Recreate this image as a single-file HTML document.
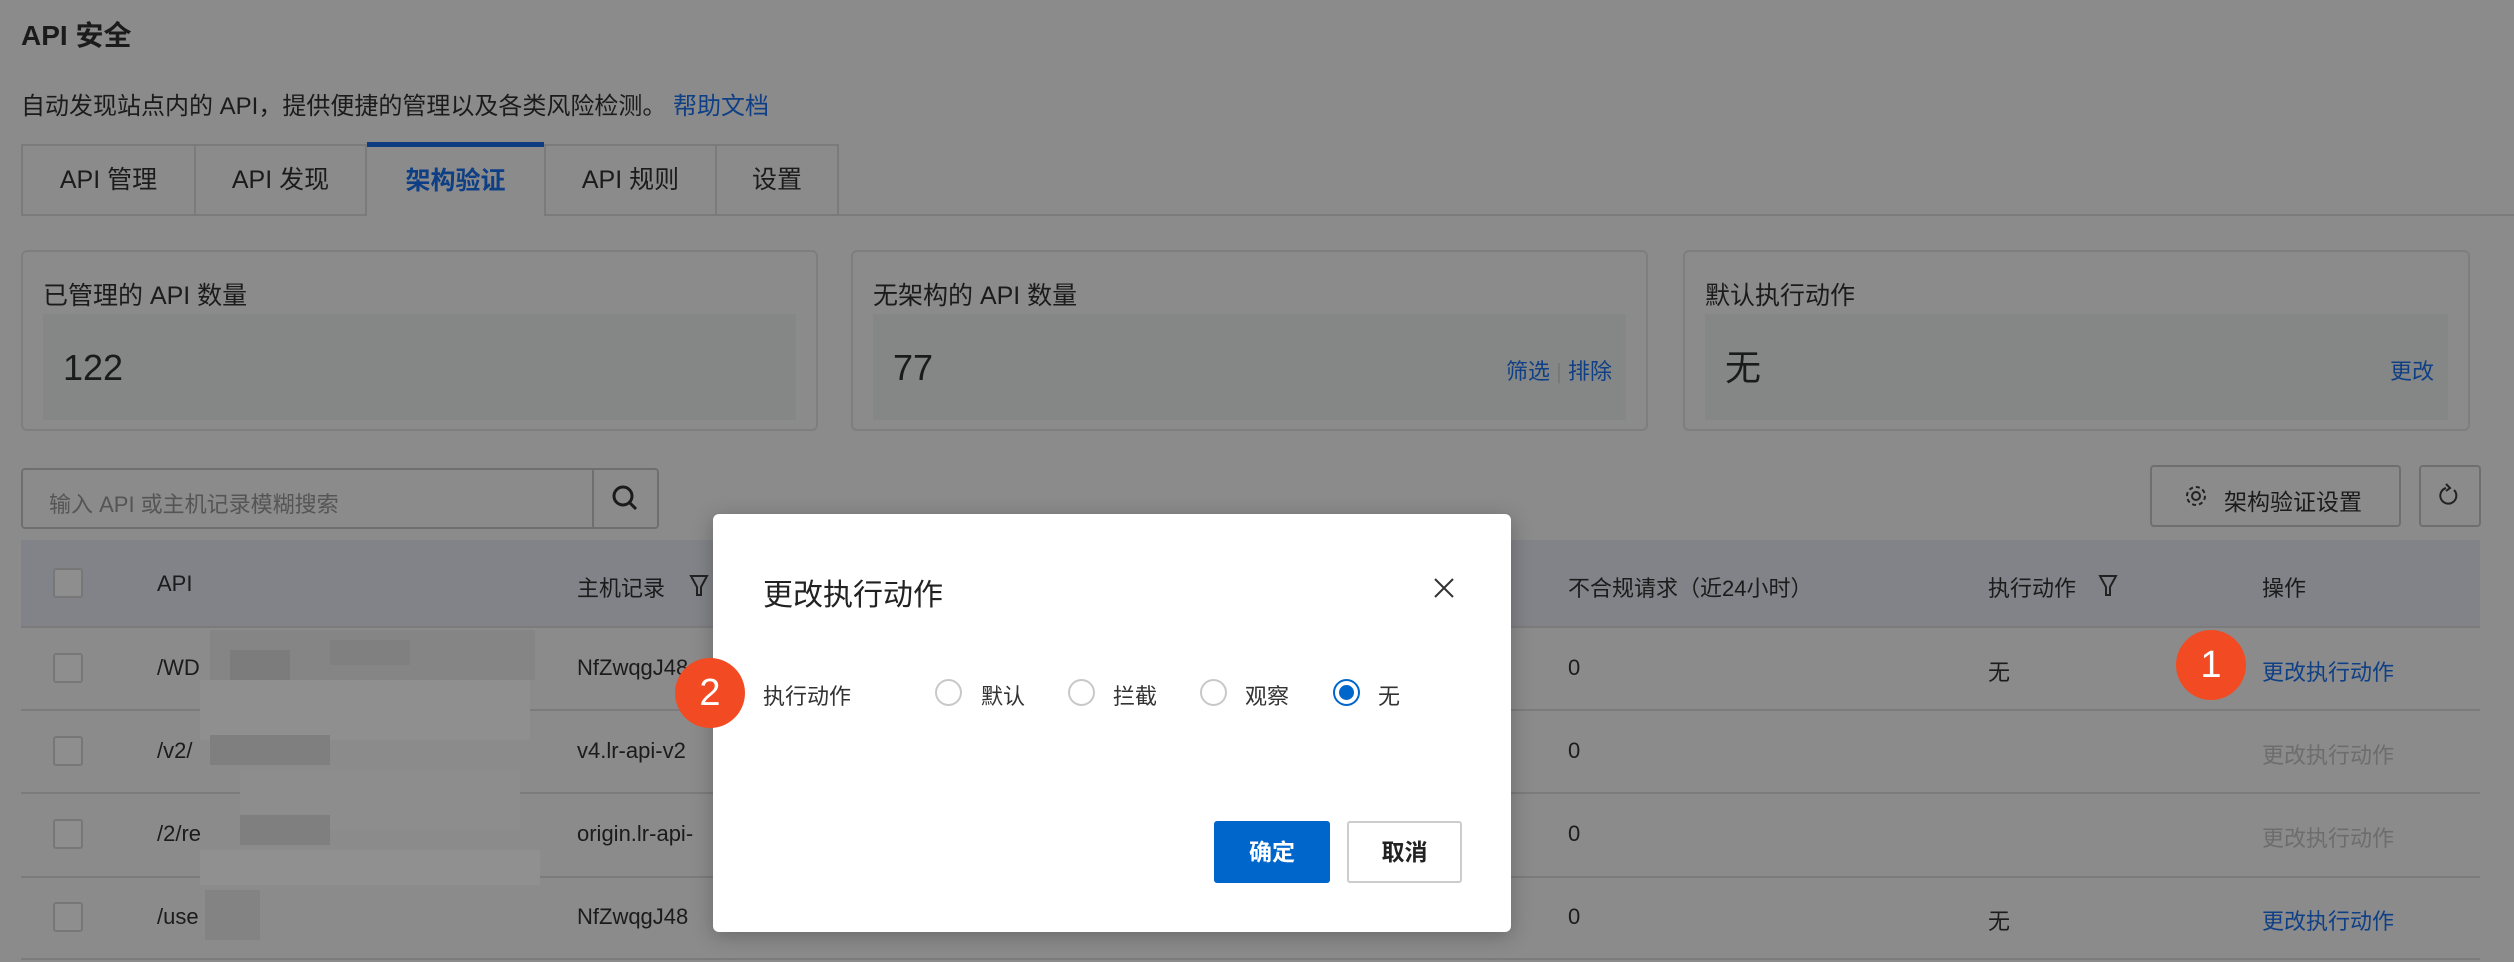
<!DOCTYPE html>
<html><head><meta charset="utf-8"><style>
*{margin:0;padding:0;box-sizing:border-box}
body{width:2514px;height:962px;background:#8b8b8b;font-family:"Liberation Sans","Noto Sans CJK SC",sans-serif;color:#1b1b1b;position:relative;overflow:hidden}
.a{position:absolute;white-space:nowrap}
.card{position:absolute;top:250px;height:181px;border:2px solid #7e7e7e;border-radius:6px}
.card .lb{position:absolute;left:20px;top:24px;font-size:25px}
.card .in{position:absolute;left:20px;right:20px;top:62px;height:106px;background:#858786}
.card .v{position:absolute;left:20px;top:34px;font-size:36px;line-height:40px}
.cb{position:absolute;width:30px;height:30px;border:2px solid #777;border-radius:3px;background:#8e8e8e}
.tx{font-size:22px}
.ln{position:absolute;left:21px;width:2459px;height:2px;background:#7b7b7b}
.rd{position:absolute;width:27px;height:27px;border:2px solid #c8c8c8;border-radius:50%;background:#fff}
.badge{position:absolute;width:70px;height:70px;border-radius:50%;background:#f24b23;color:#fff;font-size:38px;text-align:center;line-height:70px}
.px{position:absolute}
</style></head><body>
<div class="a" style="left:21px;top:14px;font-size:28px;font-weight:bold">API 安全</div>
<div class="a" style="left:21px;top:86px;font-size:24px">自动发现站点内的 API，提供便捷的管理以及各类风险检测。 <span style="color:#0f3f85">帮助文档</span></div>
<div class="a" style="left:21px;top:214px;width:2493px;height:2px;background:#7b7b7b"></div>
<div class="a" style="left:21px;top:144px;width:173px;height:72px;border:2px solid #7b7b7b;border-right:none;font-size:25px;text-align:center;line-height:68px">API 管理</div>
<div class="a" style="left:194px;top:144px;width:173px;height:72px;border:2px solid #7b7b7b;font-size:25px;text-align:center;line-height:68px">API 发现</div>
<div class="a" style="left:367px;top:142px;width:177px;height:76px;border-top:5px solid #0e3a82;background:#8b8b8b;color:#0e3f85;font-weight:bold;font-size:25px;text-align:center;line-height:68px">架构验证</div>
<div class="a" style="left:544px;top:144px;width:173px;height:72px;border:2px solid #7b7b7b;font-size:25px;text-align:center;line-height:68px">API 规则</div>
<div class="a" style="left:717px;top:144px;width:122px;height:72px;border:2px solid #7b7b7b;border-left:none;font-size:25px;text-align:center;line-height:68px">设置</div>
<div class="card" style="left:21px;width:797px"><div class="lb">已管理的 API 数量</div><div class="in"><div class="v">122</div></div></div>
<div class="card" style="left:851px;width:797px"><div class="lb">无架构的 API 数量</div><div class="in"><div class="v">77</div><div class="a" style="right:14px;top:40px;font-size:22px;color:#0f3f85">筛选 <span style="color:#777">|</span> 排除</div></div></div>
<div class="card" style="left:1683px;width:787px"><div class="lb">默认执行动作</div><div class="in"><div class="v">无</div><div class="a" style="right:14px;top:40px;font-size:22px;color:#0f3f85">更改</div></div></div>
<div class="a" style="left:21px;top:468px;width:573px;height:61px;border:2px solid #6f6f6f;border-radius:4px 0 0 4px;font-size:22px;color:#555;padding:17px 0 0 26px">输入 API 或主机记录模糊搜索</div>
<div class="a" style="left:592px;top:468px;width:67px;height:61px;border:2px solid #6f6f6f;border-radius:0 4px 4px 0"><svg width="63" height="57"><circle cx="29" cy="26" r="9" fill="none" stroke="#1b1b1b" stroke-width="3"/><line x1="35.5" y1="32.5" x2="42" y2="39" stroke="#1b1b1b" stroke-width="3"/></svg></div>
<div class="a" style="left:2150px;top:465px;width:251px;height:62px;border:2px solid #6f6f6f;border-radius:4px;font-size:23px;padding:16px 0 0 72px">架构验证设置</div>
<svg class="a" style="left:2183px;top:483px" width="26" height="26" viewBox="0 0 26 26"><circle cx="13" cy="13" r="4" fill="none" stroke="#222" stroke-width="2"/><circle cx="13" cy="13" r="9" fill="none" stroke="#222" stroke-width="2" stroke-dasharray="4 3"/></svg>
<div class="a" style="left:2419px;top:465px;width:62px;height:62px;border:2px solid #6f6f6f;border-radius:4px"><svg width="58" height="58"><path d="M33 23 A8 8 0 1 1 25 21" fill="none" stroke="#222" stroke-width="2"/><path d="M25 17 l4 4 -4 3" fill="none" stroke="#222" stroke-width="2"/></svg></div>
<div class="a" style="left:21px;top:540px;width:2459px;height:87px;background:#828388"></div>
<div class="cb" style="left:53px;top:568px"></div>
<div class="a tx" style="left:157px;top:571px">API</div>
<div class="a tx" style="left:577px;top:571px">主机记录</div>
<svg class="a" style="left:688px;top:573px" width="22" height="26"><path d="M3 3H19L13 14V22H9V14Z" fill="none" stroke="#222" stroke-width="2"/></svg>
<div class="a tx" style="left:1568px;top:571px">不合规请求（近24小时）</div>
<div class="a tx" style="left:1988px;top:571px">执行动作</div>
<svg class="a" style="left:2097px;top:573px" width="22" height="26"><path d="M3 3H19L13 14V22H9V14Z" fill="none" stroke="#222" stroke-width="2"/></svg>
<div class="a tx" style="left:2262px;top:571px">操作</div>
<div class="ln" style="top:626px"></div><div class="ln" style="top:709px"></div><div class="ln" style="top:792px"></div><div class="ln" style="top:876px"></div><div class="ln" style="top:958px"></div>
<div class="cb" style="left:53px;top:653px"></div><div class="cb" style="left:53px;top:736px"></div><div class="cb" style="left:53px;top:819px"></div><div class="cb" style="left:53px;top:902px"></div>
<div class="a tx" style="left:157px;top:655px">/WD</div><div class="a tx" style="left:577px;top:655px">NfZwqgJ48</div><div class="a tx" style="left:1568px;top:655px">0</div><div class="a tx" style="left:1988px;top:655px">无</div><div class="a tx" style="left:2262px;top:655px;color:#0f3f85">更改执行动作</div>
<div class="a tx" style="left:157px;top:738px">/v2/</div><div class="a tx" style="left:577px;top:738px">v4.lr-api-v2</div><div class="a tx" style="left:1568px;top:738px">0</div><div class="a tx" style="left:2262px;top:738px;color:#6d6d6d">更改执行动作</div>
<div class="a tx" style="left:157px;top:821px">/2/re</div><div class="a tx" style="left:577px;top:821px">origin.lr-api-</div><div class="a tx" style="left:1568px;top:821px">0</div><div class="a tx" style="left:2262px;top:821px;color:#6d6d6d">更改执行动作</div>
<div class="a tx" style="left:157px;top:904px">/use</div><div class="a tx" style="left:577px;top:904px">NfZwqgJ48</div><div class="a tx" style="left:1568px;top:904px">0</div><div class="a tx" style="left:1988px;top:904px">无</div><div class="a tx" style="left:2262px;top:904px;color:#0f3f85">更改执行动作</div>
<div class="px" style="left:210px;top:630px;width:325px;height:50px;background:#858585"></div>
<div class="px" style="left:230px;top:650px;width:60px;height:30px;background:#7c7c7c"></div>
<div class="px" style="left:330px;top:640px;width:80px;height:25px;background:#808080"></div>
<div class="px" style="left:200px;top:680px;width:330px;height:60px;background:#8f8f8f"></div>
<div class="px" style="left:210px;top:735px;width:120px;height:30px;background:#7f7f7f"></div>
<div class="px" style="left:240px;top:770px;width:280px;height:60px;background:#8d8d8d"></div>
<div class="px" style="left:240px;top:815px;width:90px;height:30px;background:#7f7f7f"></div>
<div class="px" style="left:200px;top:850px;width:340px;height:35px;background:#909090"></div>
<div class="px" style="left:205px;top:890px;width:55px;height:50px;background:#838383"></div>
<div class="a" style="left:713px;top:514px;width:798px;height:418px;background:#fff;border-radius:6px;box-shadow:0 4px 20px rgba(0,0,0,.25)"></div>
<div class="a" style="left:763px;top:570px;font-size:30px;color:#222">更改执行动作</div>
<svg class="a" style="left:1430px;top:574px" width="28" height="28"><path d="M5 5L23 23M23 5L5 23" stroke="#333" stroke-width="2"/></svg>
<div class="a" style="left:763px;top:679px;font-size:22px;color:#333">执行动作</div>
<div class="rd" style="left:935px;top:679px"></div><div class="a" style="left:981px;top:679px;font-size:22px;color:#333">默认</div>
<div class="rd" style="left:1068px;top:679px"></div><div class="a" style="left:1113px;top:679px;font-size:22px;color:#333">拦截</div>
<div class="rd" style="left:1200px;top:679px"></div><div class="a" style="left:1245px;top:679px;font-size:22px;color:#333">观察</div>
<div class="rd" style="left:1333px;top:679px;border-color:#0066cc"><div style="position:absolute;left:4px;top:4px;width:15px;height:15px;border-radius:50%;background:#0066cc"></div></div><div class="a" style="left:1378px;top:679px;font-size:22px;color:#333">无</div>
<div class="a" style="left:1214px;top:821px;width:116px;height:62px;background:#0066cc;border-radius:3px;color:#fff;font-size:23px;font-weight:bold;text-align:center;line-height:62px">确定</div>
<div class="a" style="left:1347px;top:821px;width:115px;height:62px;border:2px solid #ccc;border-radius:3px;color:#222;font-size:23px;font-weight:bold;text-align:center;line-height:58px">取消</div>
<div class="badge" style="left:675px;top:658px">2</div>
<div class="badge" style="left:2176px;top:630px">1</div>
</body></html>
